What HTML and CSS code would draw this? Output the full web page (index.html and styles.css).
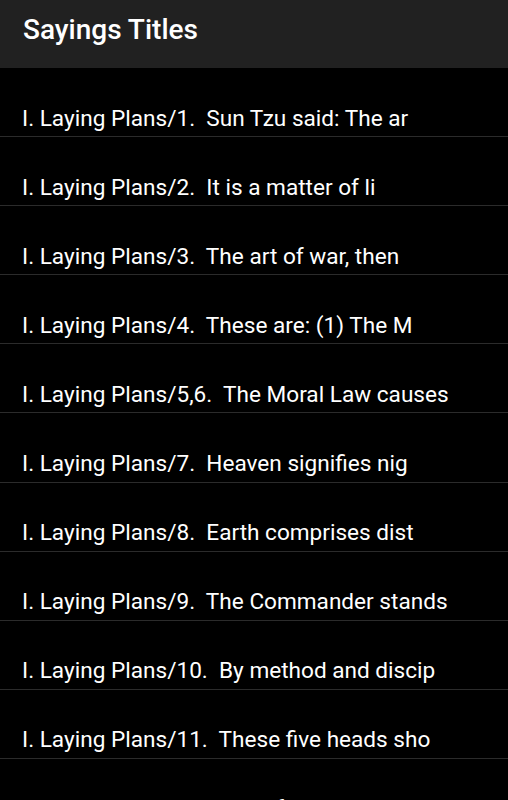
FILE: index.html
```html
<!DOCTYPE html>
<html lang="en">
  <head>
    <meta charset="UTF-8" />
    <meta name="viewport" content="width=device-width, initial-scale=1.0" />
    <title>Sayings Titles</title>
    <link rel="stylesheet" href="styles.css">
  </head>

  <body>
    <div class="app-bar">
      <h1 class="app-title">Sayings Titles</h1>
    </div>

    <ul class="sayings">
      <li class="saying">I. Laying Plans/1.&nbsp; Sun Tzu said: The ar</li>
      <li class="saying">I. Laying Plans/2.&nbsp; It is a matter of li</li>
      <li class="saying">I. Laying Plans/3.&nbsp; The art of war, then</li>
      <li class="saying">I. Laying Plans/4.&nbsp; These are: (1) The M</li>
      <li class="saying">I. Laying Plans/5,6.&nbsp; The Moral Law causes</li>
      <li class="saying">I. Laying Plans/7.&nbsp; Heaven signifies nig</li>
      <li class="saying">I. Laying Plans/8.&nbsp; Earth comprises dist</li>
      <li class="saying">I. Laying Plans/9.&nbsp; The Commander stands</li>
      <li class="saying">I. Laying Plans/10.&nbsp; By method and discip</li>
      <li class="saying">I. Laying Plans/11.&nbsp; These five heads sho</li>
      <li class="saying">I. Laying Plans/12.&nbsp; Therefore, in your d</li>
    </ul>
  </body>
</html>
```

FILE: styles.css
```css
html,
body {
  margin: 0;
  background-color: #000;
  overflow: hidden;
}

body {
  height: 800px;
  font-family: Roboto, "Liberation Sans", sans-serif;
  color: #fff;
}

.app-bar {
  height: 68px;
  padding: 14px 23px 0;
  box-sizing: border-box;
  background-color: #212121;
}

.app-title {
  margin: 0;
  font-size: 28px;
  line-height: 32px;
  font-weight: 500;
}

.sayings {
  margin: 0;
  padding: 0;
  list-style: none;
}

.saying {
  height: 69.1px;
  padding: 37.5px 22px 0;
  box-sizing: border-box;
  border-bottom: 1px solid #2b2b2b;
  font-size: 22.6px;
  line-height: 26px;
  white-space: nowrap;
}
```
